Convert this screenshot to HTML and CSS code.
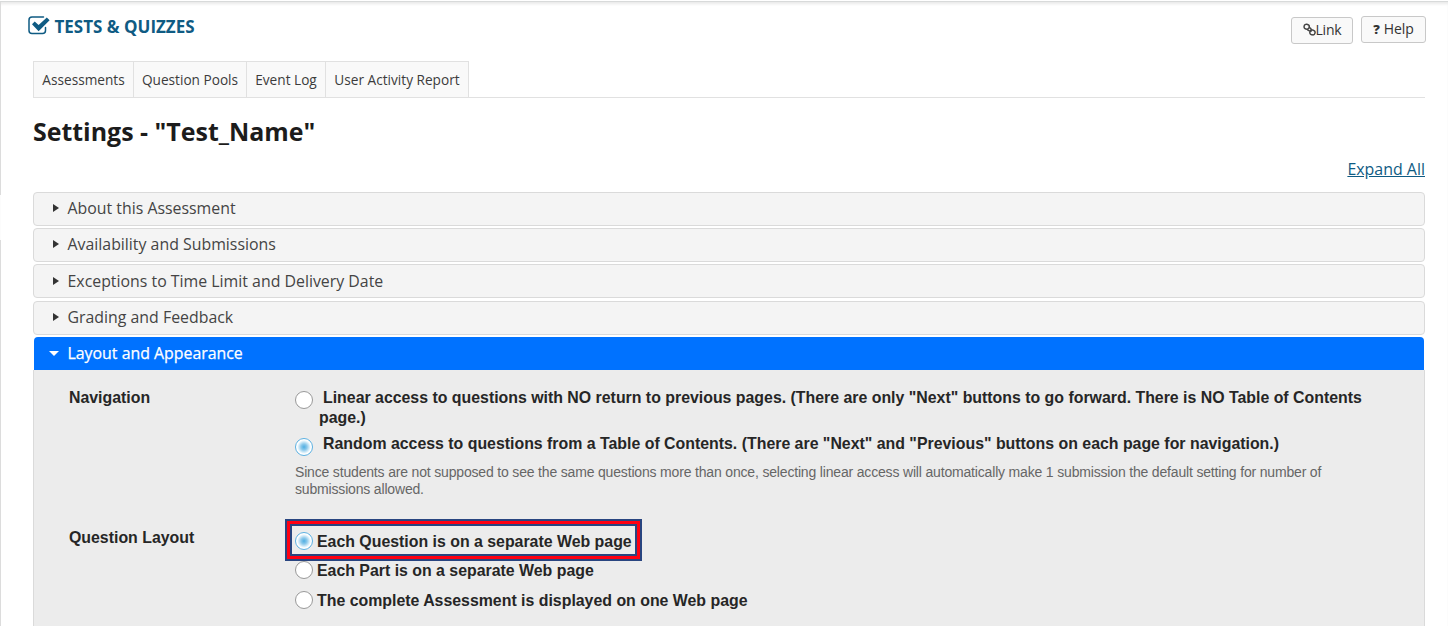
FILE: index.html
```html
<!DOCTYPE html>
<html lang="en">
<head>
<meta charset="utf-8">
<title>Tests &amp; Quizzes</title>
<link rel="stylesheet" href="styles.css">
</head>
<body>
<div class="frame">
  <div class="edge"><i class="edge-top"></i><i class="edge-bottom"></i></div>
  <main class="content">
    <header class="tool-header">
      <div class="tool-title">
        <svg class="check-icon" viewBox="0 0 22 19" width="22" height="19"><path d="M15.5 1.1H4Q1 1.1 1 4.1V14.6Q1 17.6 4 17.6H14.5Q17.5 17.6 17.5 14.6V11.4" fill="none" stroke="#0f5b83" stroke-width="1.5" stroke-linecap="round"/><path d="M4 8.3L6.7 5.6L10.6 9.1L18.8 1.4L21.6 4.2L10.6 15.2Z" fill="#0f5b83"/></svg>
        <span class="tool-name">TESTS &amp; QUIZZES</span>
      </div>
      <div class="actions">
        <a class="button link-button"><svg width="13" height="13" viewBox="0 0 13 13" fill="none" stroke="#444" stroke-width="1.5"><rect x="1" y="1.3" width="5.2" height="4.8" rx="2.3" transform="rotate(12 3.6 4)"/><rect x="6.9" y="7" width="5.2" height="4.8" rx="2.3" transform="rotate(12 9.3 9.2)"/><path d="M3.8 5.8Q5.5 8.6 8.6 8.2M6 4.2Q8.3 5 8.5 7.2"/></svg><span class="link-text">Link</span></a>
        <a class="button help-button"><b class="question">?</b><span class="help-text">Help</span></a>
      </div>
    </header>
    <nav class="tabs">
      <a class="tab t1"><span>Assessments</span></a><a class="tab t2"><span>Question Pools</span></a><a class="tab t3"><span>Event Log</span></a><a class="tab t4"><span>User Activity Report</span></a>
    </nav>
    <h1 class="page-title"><span>Settings - "Test_Name"</span></h1>
    <div class="expand-row"><a class="expand">Expand All</a></div>
    <div class="accordion">
      <h3 class="section"><i class="arrow"></i><span>About this Assessment</span></h3>
      <h3 class="section"><i class="arrow"></i><span>Availability and Submissions</span></h3>
      <h3 class="section"><i class="arrow"></i><span>Exceptions to Time Limit and Delivery Date</span></h3>
      <h3 class="section"><i class="arrow"></i><span>Grading and Feedback</span></h3>
      <h3 class="section open"><i class="arrow"></i><span>Layout and Appearance</span></h3>
    </div>
    <section class="panel">
      <div class="field navigation">
        <div class="label"><span>Navigation</span></div>
        <div class="options">
          <label class="option long"><i class="radio"></i><span class="linear"><span class="first-line">Linear access to questions with NO return to previous pages. (There are only "Next" buttons to go forward. There is NO Table of Contents</span><br>page.)</span></label>
          <label class="option long random-option"><i class="radio on"></i><span class="random">Random access to questions from a Table of Contents. (There are "Next" and "Previous" buttons on each page for navigation.)</span></label>
          <p class="hint"><span>Since students are not supposed to see the same questions more than once, selecting linear access will automatically make 1 submission the default setting for number of</span><br>submissions allowed.</p>
        </div>
      </div>
      <div class="field question-layout">
        <div class="label"><span>Question Layout</span></div>
        <div class="options">
          <div class="highlight"><label class="option"><i class="radio on"></i><span>Each Question is on a separate Web page</span></label></div>
          <label class="option"><i class="radio"></i><span>Each Part is on a separate Web page</span></label>
          <label class="option last"><i class="radio"></i><span>The complete Assessment is displayed on one Web page</span></label>
        </div>
      </div>
    </section>
  </main>
</div>
</body>
</html>
```
FILE: styles.css
```css
* { box-sizing: border-box; }
body { margin: 0; padding-top: 1px; background: #fff; font-family: "Open Sans", sans-serif; color: #333; overflow: hidden; }
.frame { display: flex; height: 625px; border-top: 1px solid #d8dada; box-shadow: inset 0 3px 3px -1px #e9e9e9; }
.edge { width: 33px; display: flex; flex-direction: column; justify-content: space-between; }
.edge-top, .edge-bottom { width: 1px; background: #dcdcdc; }
.edge-top { height: 193px; }
.edge-bottom { height: 386px; }
.content { width: 1392px; white-space: nowrap; }
.tool-header { height: 59px; display: flex; justify-content: space-between; }
.tool-title { display: flex; margin: 14px 0 0 -5px; height: 20px; color: #0f5b83; }
.tool-name { font-size: 17px; line-height: 22px; font-weight: 700; margin-left: 4.5px; }
.actions { display: flex; gap: 8px; padding-top: 14px; margin-right: -1px; }
.button { height: 27px; border: 1px solid #c8c8c8; border-radius: 3px; background: #f9f9f9; display: flex; align-items: center; justify-content: center; font-size: 14px; line-height: 20px; padding-bottom: 2px; }
.link-button { width: 62px; margin-top: 1px; letter-spacing: -0.2px; }
.help-button { width: 65px; gap: 4px; letter-spacing: -0.1px; }
.question { font-size: 13px; font-weight: 800; }
.tabs { height: 37px; display: flex; border-bottom: 1px solid #e1e1e1; }
.tab { height: 37px; border: 1px solid #e1e1e1; border-left: 0; background: #f9f9f9; display: flex; align-items: center; justify-content: center; font-size: 13.65px; color: #3c3c3c; }
.t1 { width: 101px; border-left: 1px solid #e1e1e1; }
.t2 { width: 113px; }
.t3 { width: 79px; }
.t4 { width: 143px; }
.page-title { margin: 16px 0 0; height: 34px; line-height: 34px; font-size: 24.95px; color: #1c1c1c; }
.expand-row { height: 43.5px; padding-top: 9px; text-align: right; }
.expand { font-size: 15.95px; line-height: 24px; color: #0f5b83; text-decoration: underline; }
.accordion { display: flex; flex-direction: column; gap: 2.4px; }
.section { margin: 0; height: 34px; border: 1px solid #dadada; border-radius: 4px; background: #f4f4f4; display: flex; align-items: center; font-size: 15.88px; font-weight: 400; color: #444; padding-left: 19px; padding-bottom: 1px; }
.arrow { border-left: 6px solid #333; border-top: 4px solid transparent; border-bottom: 4px solid transparent; margin-right: 8.5px; }
.open { height: 33px; background: #0072ff; border: 0; border-radius: 4px 4px 0 0; margin: 0 1px; color: #fff; padding-left: 15px; -webkit-text-stroke: 0.25px #fff; }
.open .arrow { border-top: 5px solid #fff; border-left: 5px solid transparent; border-right: 5px solid transparent; border-bottom: 0; margin-right: 8.5px; }
.panel { height: 256px; background: #ececec; border: solid #dadada; border-width: 0 1px; padding: 18px 0 0 35px; font-family: "Liberation Sans", sans-serif; font-size: 15.88px; line-height: 20px; color: #262626; }
.field { display: flex; }
.label { width: 226px; font-weight: 700; }
.option { display: flex; font-weight: 700; }
.radio { width: 18px; height: 18px; border: 1px solid #999; border-radius: 50%; background: #fff; flex: none; margin-right: 4px; }
.radio.on { border-color: #5cb1e2; background: radial-gradient(circle, #4eaee2 0, #8cc9eb 3px, #e6f4fb 6px, #fff 7px); }
.long .radio { margin: 3px 6px 0 0; }
.first-line, .random { margin-left: 4px; }
.random-option { margin-top: 6px; }
.random-option .radio { margin-top: 4px; }
.hint { margin: 8px 0 0; font-size: 14px; letter-spacing: -0.173px; line-height: 17px; color: #666; }
.question-layout { margin-top: 21px; }
.question-layout .label { padding-top: 9px; }
.highlight { width: 357px; height: 42px; margin-left: -10px; border: 2px solid #294580; outline: 3px solid #ff0012; outline-offset: -5px; box-shadow: inset 0 0 0 5px #294580; padding: 11px 0 0 8px; }
.question-layout .option { height: 18px; align-items: center; }
.question-layout .option span { padding-top: 1px; }
.last { margin-top: 12px; }
```
